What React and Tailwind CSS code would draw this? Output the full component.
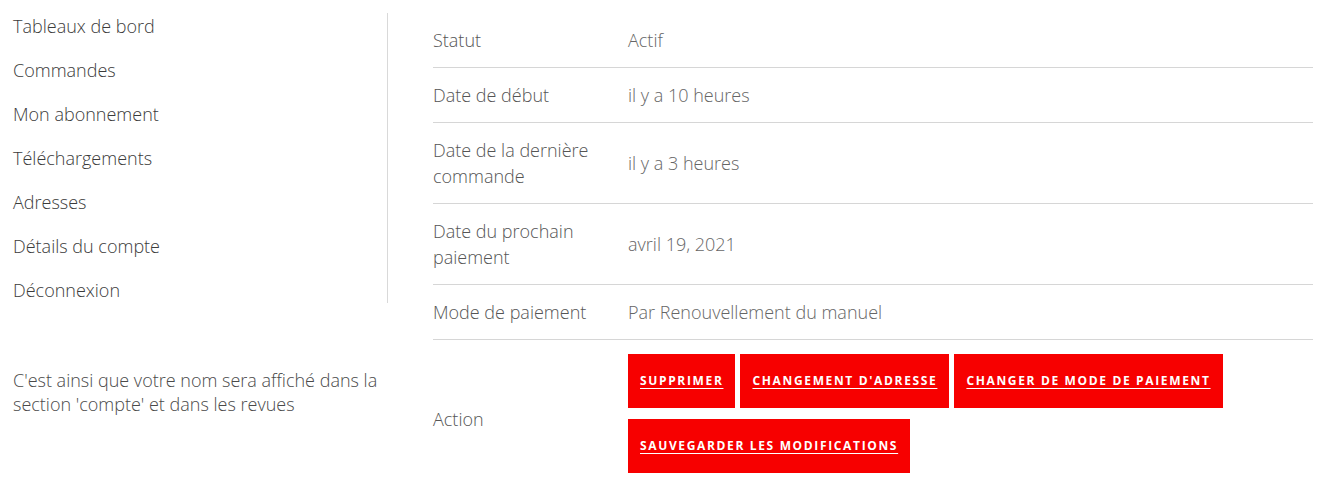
const navItems = [
  'Tableaux de bord',
  'Commandes',
  'Mon abonnement',
  'Téléchargements',
  'Adresses',
  'Détails du compte',
  'Déconnexion',
];

const rows = [
  { label: 'Statut', value: 'Actif' },
  { label: 'Date de début', value: 'il y a 10 heures' },
  { label: 'Date de la dernière commande', value: 'il y a 3 heures' },
  { label: 'Date du prochain paiement', value: 'avril 19, 2021' },
  { label: 'Mode de paiement', value: 'Par Renouvellement du manuel' },
];

const actions = [
  'Supprimer',
  "Changement d'adresse",
  'Changer de mode de paiement',
  'Sauvegarder les modifications',
];

function ActionButton({ children }) {
  return (
    <a
      href="#"
      className="inline-flex h-[54px] items-center bg-[#f70000] px-[12px] text-[12px] font-bold uppercase tracking-[1.65px] text-white underline underline-offset-[3px]"
    >
      {children}
    </a>
  );
}

export default function App() {
  return (
    <div className="flex min-h-[488px] bg-white pt-[13px] font-['Open_Sans',sans-serif] font-light text-[18px]">
      <aside className="w-[388px] shrink-0">
        <nav className="flex flex-col gap-[18px] border-r border-[#d9d9d9] pl-[13px]">
          {navItems.map((item) => (
            <a key={item} href="#" className="leading-[26px] text-[#3b3b3b]">
              {item}
            </a>
          ))}
        </nav>
        <p className="mt-[65px] w-[385px] pl-[13px] leading-[24px] text-[#4a4a4a]">
          C'est ainsi que votre nom sera affiché dans la section 'compte' et dans les revues
        </p>
      </aside>

      <main className="ml-[45px] mr-[21px] flex-1">
        {rows.map((row) => (
          <div
            key={row.label}
            className="flex items-center border-b border-[#d6d6d6] py-[14px] leading-[26px]"
          >
            <div className="w-[195px] shrink-0 pr-[20px] text-[#555]">{row.label}</div>
            <div className="flex-1 text-[#666]">{row.value}</div>
          </div>
        ))}
        <div className="flex items-center pt-[14px] pb-[14px] leading-[26px]">
          <div className="w-[195px] shrink-0 text-[#555]">Action</div>
          <div className="flex flex-1 flex-wrap gap-x-[5px] gap-y-[11px] pb-[10px]">
            {actions.map((a) => (
              <ActionButton key={a}>{a}</ActionButton>
            ))}
          </div>
        </div>
      </main>
    </div>
  );
}
